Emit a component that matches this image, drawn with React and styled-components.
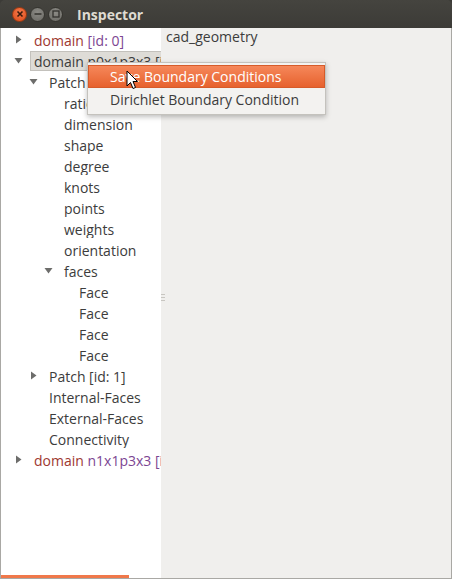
import React from 'react';
import styled, { createGlobalStyle } from 'styled-components';

const GlobalStyle = createGlobalStyle`
  html, body {
    margin: 0;
    padding: 0;
    background: #3c3b37;
  }
  body {
    font-family: 'Open Sans', 'Liberation Sans', sans-serif;
  }
`;

const Window = styled.div`
  position: relative;
  width: 452px;
  height: 579px;
  display: flex;
  flex-direction: column;
  overflow: hidden;
`;

const TitleBar = styled.div`
  height: 28px;
  flex: none;
  display: flex;
  align-items: center;
  padding-left: 12px;
  background: linear-gradient(#45443f, #3c3b37);
  border-radius: 5px 5px 0 0;
`;

const Buttons = styled.div`
  display: flex;
  gap: 3px;
  margin-right: 14px;
`;

const WinButton = styled.div`
  width: 13px;
  height: 13px;
  border-radius: 50%;
  display: flex;
  align-items: center;
  justify-content: center;
  background: ${p => (p.$close
    ? 'radial-gradient(circle at 50% 35%, #f47a4c, #dd4a18)'
    : 'radial-gradient(circle at 50% 35%, #8b8a85, #6a6964)')};
  border: 1px solid ${p => (p.$close ? '#9a3a12' : '#35342f')};
`;

const Title = styled.div`
  color: #dfdbd2;
  font-weight: 700;
  font-size: 14px;
`;

const Body = styled.div`
  flex: 1;
  display: flex;
  background: #f0efed;
  border: 1px solid #a9a8a4;
  border-top: none;
  min-height: 0;
`;

const TreePane = styled.div`
  width: 160px;
  flex: none;
  background: #fff;
  display: flex;
  flex-direction: column;
`;

const TreeList = styled.div`
  flex: 1;
  padding-top: 1px;
  overflow: hidden;
`;

const Row = styled.div`
  height: 21px;
  display: flex;
  align-items: center;
  white-space: nowrap;
  font-size: 14px;
  color: #3c3c3c;
  padding-left: ${p => 12 + p.$level * 15}px;
`;

const Expander = styled.div`
  width: 21px;
  flex: none;
  display: flex;
  align-items: center;
  justify-content: flex-start;
  padding-left: 1px;
  box-sizing: border-box;
`;

const Label = styled.div`
  flex: 1;
  height: 20px;
  line-height: 19px;
  margin-left: -4px;
  padding-left: 3px;
  border: 1px solid ${p => (p.$selected ? '#c3c1bc' : 'transparent')};
  border-right: none;
  background: ${p => (p.$selected ? '#dedcd7' : 'transparent')};
  box-sizing: border-box;
  overflow: hidden;
`;

const Domain = styled.span`
  color: ${p => (p.$selected ? '#3c3c3c' : '#9e3830')};
`;

const Meta = styled.span`
  color: ${p => (p.$selected ? '#3c3c3c' : '#7c4592')};
`;

const ScrollMark = styled.div`
  height: 3px;
  width: 128px;
  background: #f0784a;
`;

const Splitter = styled.div`
  width: 5px;
  flex: none;
  display: flex;
  flex-direction: column;
  align-items: flex-start;
  justify-content: center;
  gap: 2px;
  padding-bottom: 12px;
`;

const Grip = styled.div`
  width: 4px;
  height: 1px;
  background: #c8c6c1;
`;

const RightPane = styled.div`
  flex: 1;
  font-size: 14px;
  line-height: 17px;
  color: #3c3c3c;
`;

const Menu = styled.div`
  position: absolute;
  left: 87px;
  top: 62px;
  width: 239px;
  padding: 2px 0 2px;
  background: #f3f2f0;
  border: 1px solid #c4c2bd;
  box-shadow: 0 2px 5px rgba(0, 0, 0, 0.25);
  box-sizing: border-box;
`;

const MenuItem = styled.div`
  height: ${p => (p.$active ? 23 : 24)}px;
  line-height: ${p => (p.$active ? 23 : 24)}px;
  padding-left: 22px;
  font-size: 14px;
  white-space: nowrap;
  color: ${p => (p.$active ? '#ffffff' : '#3c3c3c')};
  background: ${p => (p.$active ? 'linear-gradient(#f6895c, #e6602c)' : 'transparent')};
  box-shadow: ${p => (p.$active ? 'inset 0 0 0 1px #d65b2a' : 'none')};
`;

const Cursor = styled.svg`
  position: absolute;
  left: 126px;
  top: 70px;
`;

const Arrow = ({ open }) => (
  <svg width="9" height="9" viewBox="0 0 9 9">
    {open
      ? <polygon points="0.5,2 8.5,2 4.5,7.5" fill="#6d6d6b" />
      : <polygon points="2,0.5 7.5,4.5 2,8.5" fill="#6d6d6b" />}
  </svg>
);

const tree = [
  { level: 0, arrow: 'closed', domain: 'domain', meta: ' [id: 0]' },
  { level: 0, arrow: 'open', domain: 'domain', meta: ' n0x1p3x3 [id: 1]', selected: true },
  { level: 1, arrow: 'open', text: 'Patch [id: 0]' },
  { level: 2, text: 'rational' },
  { level: 2, text: 'dimension' },
  { level: 2, text: 'shape' },
  { level: 2, text: 'degree' },
  { level: 2, text: 'knots' },
  { level: 2, text: 'points' },
  { level: 2, text: 'weights' },
  { level: 2, text: 'orientation' },
  { level: 2, arrow: 'open', text: 'faces' },
  { level: 3, text: 'Face' },
  { level: 3, text: 'Face' },
  { level: 3, text: 'Face' },
  { level: 3, text: 'Face' },
  { level: 1, arrow: 'closed', text: 'Patch [id: 1]' },
  { level: 1, text: 'Internal-Faces' },
  { level: 1, text: 'External-Faces' },
  { level: 1, text: 'Connectivity' },
  { level: 0, arrow: 'closed', domain: 'domain', meta: ' n1x1p3x3 [id: 2]' },
];

export default function App() {
  return (
    <Window>
      <GlobalStyle />
      <TitleBar>
        <Buttons>
          <WinButton $close>
            <svg width="8" height="8" viewBox="0 0 8 8">
              <path d="M1.5 1.5 L6.5 6.5 M6.5 1.5 L1.5 6.5" stroke="#3a1a0c" strokeWidth="1.6" />
            </svg>
          </WinButton>
          <WinButton>
            <svg width="8" height="8" viewBox="0 0 8 8">
              <path d="M0.5 4 L7.5 4" stroke="#33322e" strokeWidth="1.5" />
            </svg>
          </WinButton>
          <WinButton>
            <svg width="8" height="8" viewBox="0 0 8 8">
              <rect x="1" y="1" width="6" height="6" fill="none" stroke="#33322e" strokeWidth="1.3" />
            </svg>
          </WinButton>
        </Buttons>
        <Title>Inspector</Title>
      </TitleBar>
      <Body>
        <TreePane>
          <TreeList>
            {tree.map((item, index) => (
              <Row key={index} $level={item.level}>
                <Expander>{item.arrow && <Arrow open={item.arrow === 'open'} />}</Expander>
                <Label $selected={item.selected}>
                  {item.domain ? (
                    <>
                      <Domain $selected={item.selected}>{item.domain}</Domain>
                      <Meta $selected={item.selected}>{item.meta}</Meta>
                    </>
                  ) : item.text}
                </Label>
              </Row>
            ))}
          </TreeList>
          <ScrollMark />
        </TreePane>
        <Splitter>
          <Grip />
          <Grip />
          <Grip />
        </Splitter>
        <RightPane>cad_geometry</RightPane>
      </Body>
      <Menu>
        <MenuItem $active>Save Boundary Conditions</MenuItem>
        <MenuItem>Dirichlet Boundary Condition</MenuItem>
      </Menu>
      <Cursor width="13" height="21" viewBox="0 0 13 21">
        <polygon
          points="1,1 1,16 4.5,12.5 7,18.5 9.5,17.5 7,11.5 11.5,11.5"
          fill="#ffffff"
          stroke="#000000"
          strokeWidth="1"
          strokeLinejoin="round"
        />
      </Cursor>
    </Window>
  );
}
